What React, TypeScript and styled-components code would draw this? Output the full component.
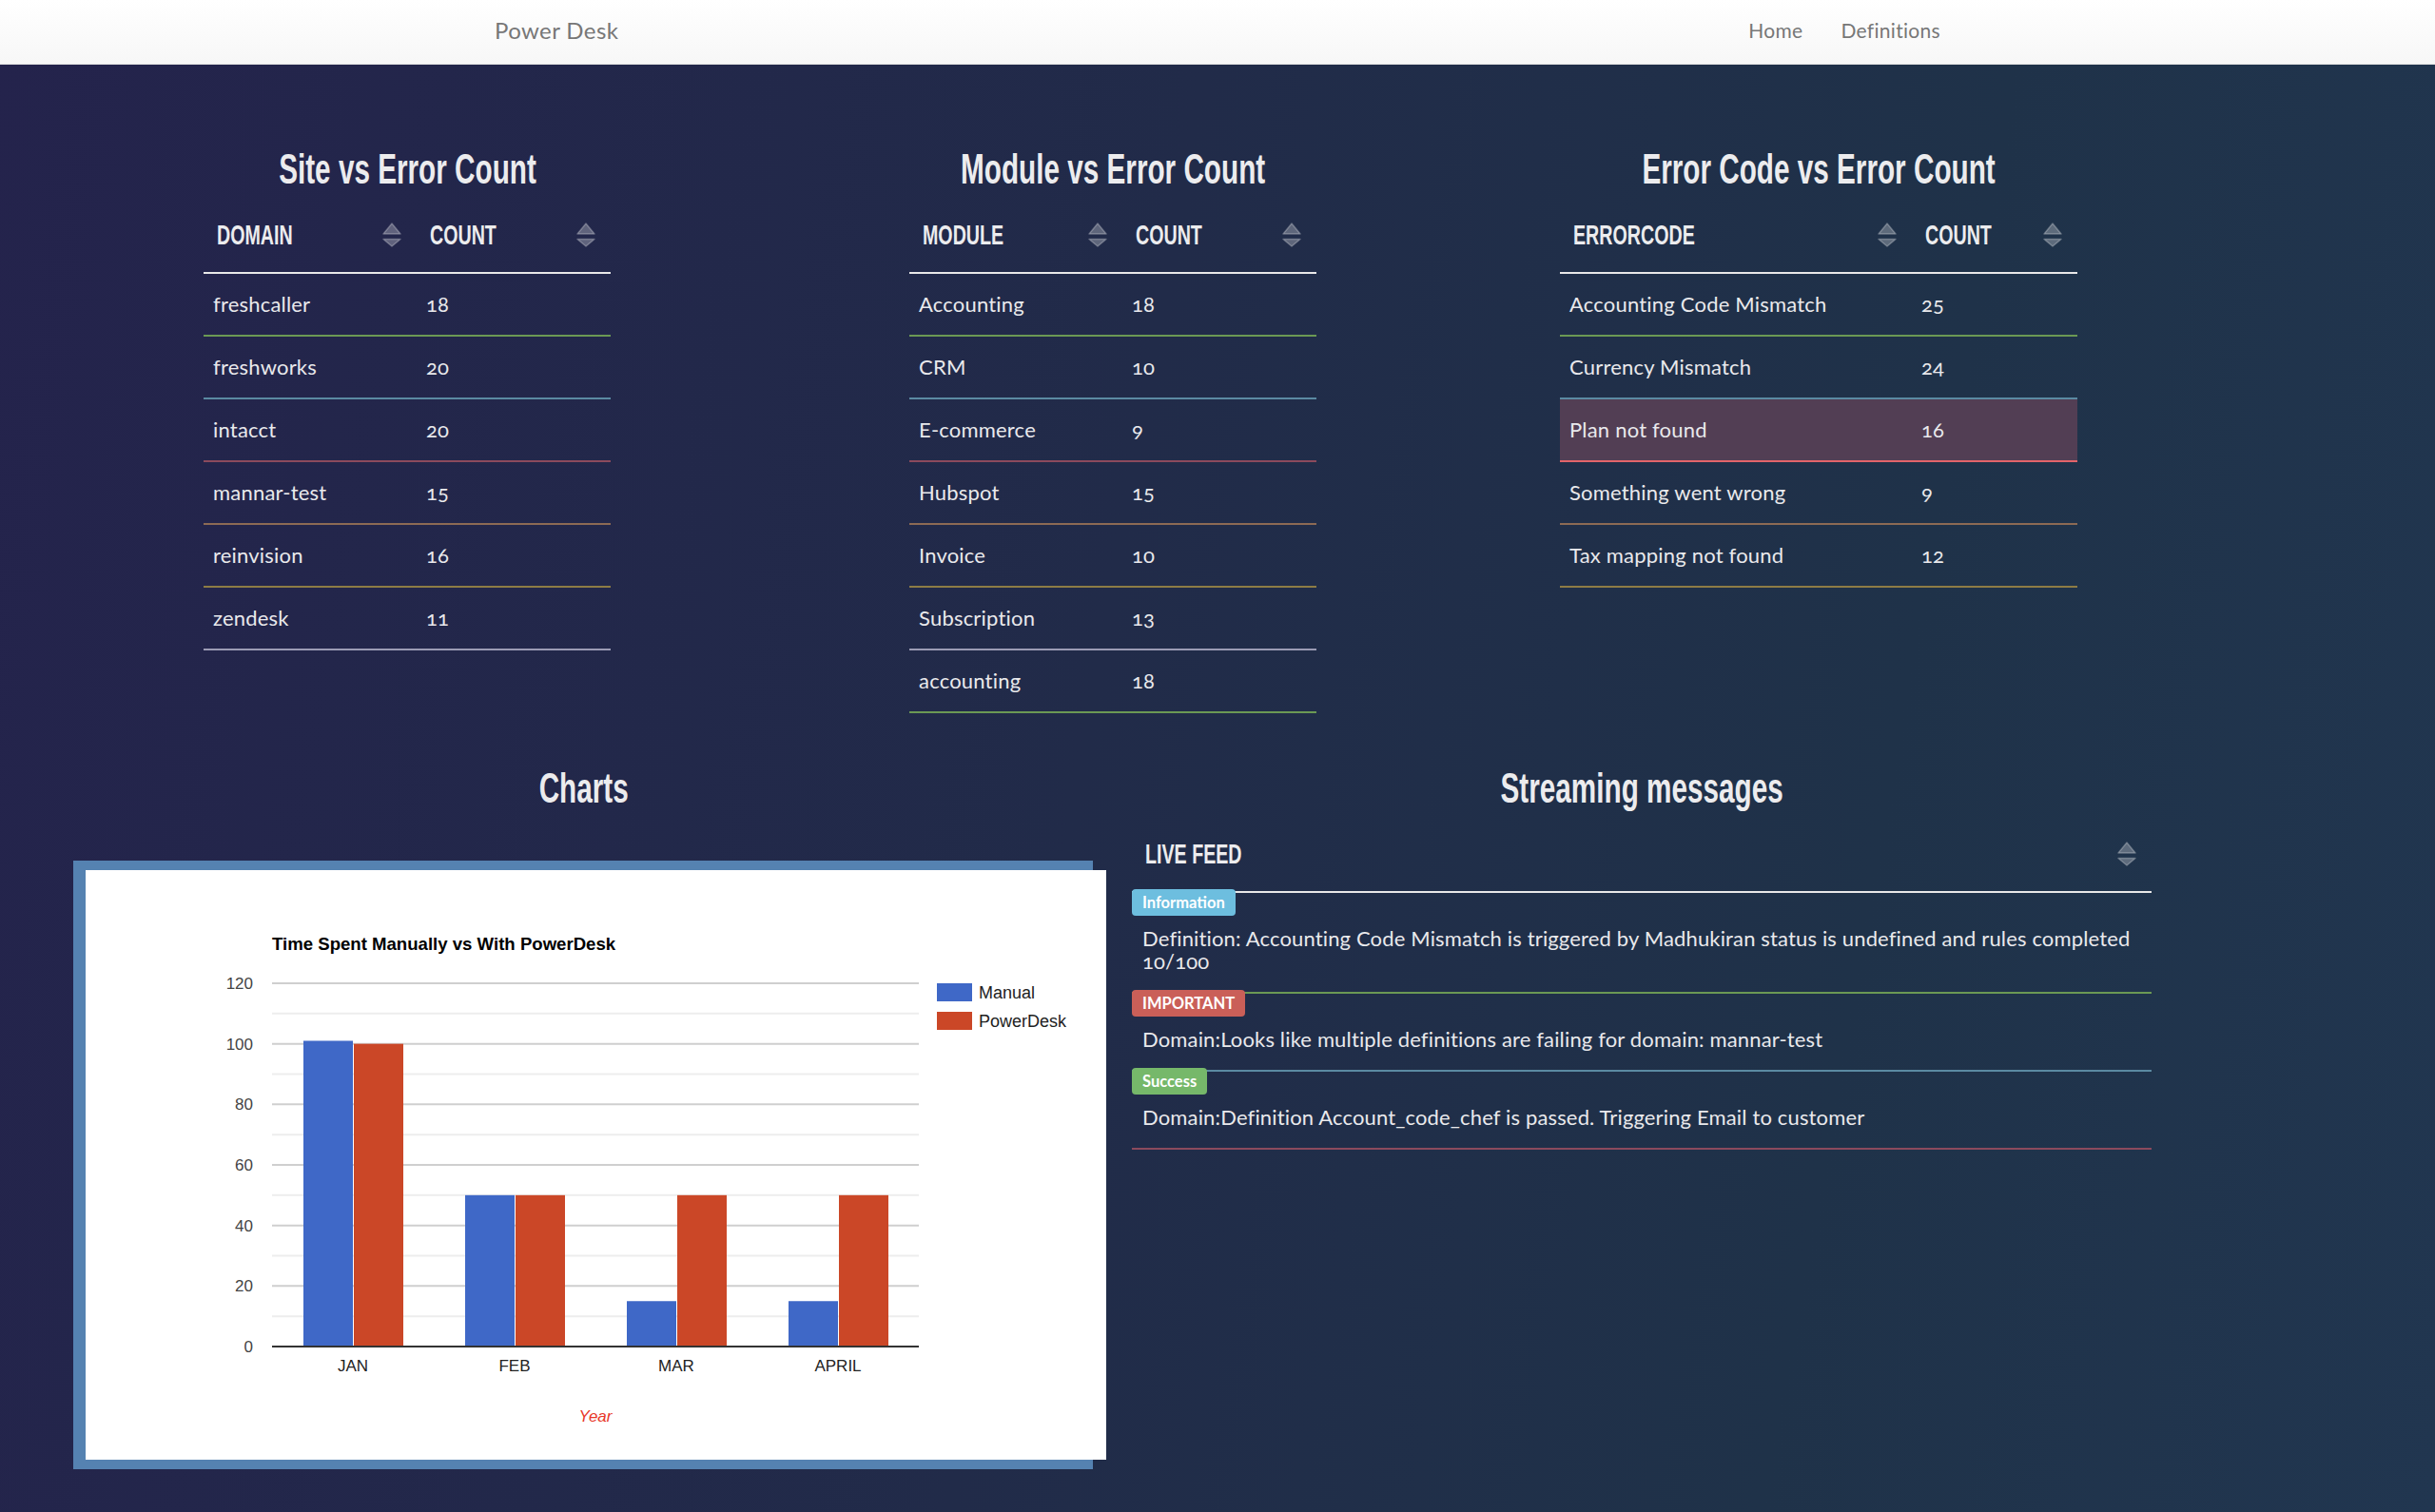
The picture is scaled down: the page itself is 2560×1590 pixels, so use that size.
import React from 'react';
import styled, { createGlobalStyle, css } from 'styled-components';

const GlobalStyle = createGlobalStyle`
  html, body { margin: 0; padding: 0; height: 100%; }
  body {
    min-height: 100%;
    background: linear-gradient(100deg, #24234c 0%, #212b49 45%, #1f3249 75%, #213650 100%);
    font-family: Lato, "Open Sans", sans-serif;
    color: #e9e9ec;
  }
`;

const condensed = `"Liberation Sans", Arial, sans-serif`;

const Navbar = styled.header`
  height: 67px;
  background: linear-gradient(to bottom, #ffffff 0%, #f7f7f7 100%);
  border-bottom: 1px solid #e2e2e2;
`;

const NavInner = styled.div`
  box-sizing: border-box;
  width: 1520px;
  height: 100%;
  margin: 0 auto;
  padding-bottom: 5px;
  display: flex;
  align-items: center;
  justify-content: space-between;
`;

const Brand = styled.a`
  font-size: 24px;
  color: #777;
  text-decoration: none;
  letter-spacing: 0.4px;
`;

const NavLinks = styled.nav`
  display: flex;
  gap: 40px;
`;

const NavLink = styled.a`
  font-size: 21px;
  color: #777;
  text-decoration: none;
  letter-spacing: 0.3px;
`;

const Main = styled.main`
  margin-left: 57px;
  width: 2226px;
  padding-top: 86px;
`;

const TopGrid = styled.section`
  display: grid;
  grid-template-columns: repeat(3, 742px);
  align-items: start;
  margin-bottom: 55px;
`;

const BottomGrid = styled.section`
  display: grid;
  grid-template-columns: repeat(2, 1113px);
  align-items: start;
`;

const Panel = styled.div`
  display: flex;
  flex-direction: column;
  align-items: center;
`;

const WidePanel = styled.div`
  display: flex;
  flex-direction: column;
  align-items: flex-start;
  padding: 0 20px;
`;

const Title = styled.h2`
  align-self: center;
  margin: 0 0 22px;
  font-family: ${condensed};
  font-size: 44px;
  line-height: 48px;
  font-weight: 700;
  color: #ececee;
  text-align: center;
  white-space: nowrap;
  transform: scaleX(0.675);
`;

const Table = styled.table`
  border-collapse: separate;
  border-spacing: 0;
  table-layout: fixed;
`;

const Col = styled.col<{ $w: number }>`
  width: ${(p) => p.$w}px;
`;

const Th = styled.th`
  padding: 8px 11px 24px 14px;
  text-align: left;
  border-bottom: 2px solid #e8e8e8;
`;

const ThInner = styled.div`
  display: flex;
  align-items: center;
  justify-content: space-between;
  padding-right: 5px;
`;

const HeadLabel = styled.span`
  display: inline-block;
  font-family: ${condensed};
  font-size: 30px;
  line-height: 30px;
  font-weight: 700;
  color: #ececee;
  text-transform: uppercase;
  white-space: nowrap;
  transform: scaleX(0.655);
  transform-origin: left center;
`;

const rowColors = css`
  & > tr:nth-child(6n + 1) > td { border-bottom-color: #6b9954; }
  & > tr:nth-child(6n + 2) > td { border-bottom-color: #5b8aa2; }
  & > tr:nth-child(6n + 3) > td { border-bottom-color: #8b4a5d; }
  & > tr:nth-child(6n + 4) > td { border-bottom-color: #8c6a54; }
  & > tr:nth-child(6n + 5) > td { border-bottom-color: #8d7c45; }
  & > tr:nth-child(6n + 6) > td { border-bottom-color: #9b9bb4; }
`;

const Body = styled.tbody`
  ${rowColors}
`;

const Tr = styled.tr<{ $active?: boolean }>`
  background: ${(p) => (p.$active ? '#523e54' : 'transparent')};
  & > td { ${(p) => (p.$active ? 'border-bottom-color: #e2646a !important;' : '')} }
`;

const Td = styled.td`
  padding: 20px 10px;
  border-bottom: 2px solid transparent;
  font-size: 22px;
  line-height: 24px;
  color: #e9e9ec;
  letter-spacing: 0.2px;
  white-space: nowrap;
  font-variant-numeric: oldstyle-nums;
`;

const FeedCell = styled.td`
  padding: 0 10px 20px 0;
  border-bottom: 2px solid transparent;
`;

type BadgeKind = 'info' | 'danger' | 'success';
const badgeBg: Record<BadgeKind, string> = {
  info: '#6dbedf',
  danger: '#ca5f58',
  success: '#76b86a',
};

const Badge = styled.span<{ $kind: BadgeKind }>`
  position: relative;
  display: block;
  width: fit-content;
  margin-top: -4px;
  height: 28px;
  padding: 0 11px;
  border-radius: 4px;
  background: ${(p) => badgeBg[p.$kind]};
  color: #fff;
  font-size: 16.5px;
  font-weight: 700;
  line-height: 28px;
`;

const Message = styled.p`
  margin: 12px 0 0;
  padding-left: 11px;
  max-width: 1052px;
  font-size: 22px;
  line-height: 24px;
  letter-spacing: 0.15px;
  color: #e9e9ec;
  font-variant-numeric: oldstyle-nums;
`;

const ChartFrame = styled.div`
  box-sizing: border-box;
  margin-top: 30px;
  width: 1072px;
  padding: 10px 0 10px 13px;
  background: #5582b1;
`;

const ChartCard = styled.div`
  width: 1073px;
  height: 620px;
  background: #ffffff;
`;

const SortIcon = () => (
  <svg width="20" height="26" viewBox="0 0 20 26" aria-hidden="true">
    <g fill="rgba(255,255,255,0.28)" stroke="rgba(255,255,255,0.28)" strokeWidth="1.5" strokeLinejoin="round">
      <polygon points="10,1 19,12 1,12" />
      <polygon points="1,17.5 19,17.5 10,25" />
    </g>
  </svg>
);

type Row = [string, number];

const siteRows: Row[] = [
  ['freshcaller', 18],
  ['freshworks', 20],
  ['intacct', 20],
  ['mannar-test', 15],
  ['reinvision', 16],
  ['zendesk', 11],
];

const moduleRows: Row[] = [
  ['Accounting', 18],
  ['CRM', 10],
  ['E-commerce', 9],
  ['Hubspot', 15],
  ['Invoice', 10],
  ['Subscription', 13],
  ['accounting', 18],
];

const errorRows: Row[] = [
  ['Accounting Code Mismatch', 25],
  ['Currency Mismatch', 24],
  ['Plan not found', 16],
  ['Something went wrong', 9],
  ['Tax mapping not found', 12],
];

const CountTable = ({
  title,
  first,
  widths,
  rows,
  active,
}: {
  title: string;
  first: string;
  widths: [number, number];
  rows: Row[];
  active?: number;
}) => (
  <Panel>
    <Title>{title}</Title>
    <Table>
      <colgroup>
        <Col $w={widths[0]} />
        <Col $w={widths[1]} />
      </colgroup>
      <thead>
        <tr>
          <Th>
            <ThInner>
              <HeadLabel>{first}</HeadLabel>
              <SortIcon />
            </ThInner>
          </Th>
          <Th>
            <ThInner>
              <HeadLabel>Count</HeadLabel>
              <SortIcon />
            </ThInner>
          </Th>
        </tr>
      </thead>
      <Body>
        {rows.map(([name, count], i) => (
          <Tr key={name} $active={active === i}>
            <Td>{name}</Td>
            <Td>{count}</Td>
          </Tr>
        ))}
      </Body>
    </Table>
  </Panel>
);

const feed: { kind: BadgeKind; label: string; text: string }[] = [
  {
    kind: 'info',
    label: 'Information',
    text: 'Definition: Accounting Code Mismatch is triggered by Madhukiran status is undefined and rules completed 10/100',
  },
  {
    kind: 'danger',
    label: 'IMPORTANT',
    text: 'Domain:Looks like multiple definitions are failing for domain: mannar-test',
  },
  {
    kind: 'success',
    label: 'Success',
    text: 'Domain:Definition Account_code_chef is passed. Triggering Email to customer',
  },
];

const C = { left: 196, right: 876, top: 119, bottom: 501, max: 120 };
const yOf = (v: number) => C.bottom - (v / C.max) * (C.bottom - C.top);
const months = ['JAN', 'FEB', 'MAR', 'APRIL'];
const manual = [101, 50, 15, 15];
const powerdesk = [100, 50, 50, 50];
const ticks = [0, 10, 20, 30, 40, 50, 60, 70, 80, 90, 100, 110, 120];

const BarChart = () => (
  <svg width="1073" height="620" viewBox="0 0 1073 620" fontFamily='"Liberation Sans", Arial, sans-serif'>
    <text x={C.left} y={84} fontSize="18.6" fontWeight="700" fill="#000">
      Time Spent Manually vs With PowerDesk
    </text>
    {ticks.map((v) => (
      <line
        key={v}
        x1={C.left}
        x2={C.right}
        y1={yOf(v)}
        y2={yOf(v)}
        stroke={v % 20 === 0 ? '#cfcfcf' : '#ededed'}
        strokeWidth="2"
      />
    ))}
    {ticks
      .filter((v) => v % 20 === 0)
      .map((v) => (
        <text key={v} x={176} y={yOf(v) + 6} fontSize="17" fill="#444" textAnchor="end">
          {v}
        </text>
      ))}
    {months.map((m, i) => {
      const c = C.left + 85 + i * 170;
      return (
        <g key={m}>
          <rect x={c - 52} y={yOf(manual[i])} width="52" height={C.bottom - yOf(manual[i])} fill="#3f68c7" />
          <rect x={c + 1} y={yOf(powerdesk[i])} width="52" height={C.bottom - yOf(powerdesk[i])} fill="#cb4727" />
          <text x={c} y={527} fontSize="17" fill="#222" textAnchor="middle">
            {m}
          </text>
        </g>
      );
    })}
    <line x1={C.left} x2={C.right} y1={C.bottom} y2={C.bottom} stroke="#333" strokeWidth="2" />
    <text x={(C.left + C.right) / 2} y={580} fontSize="17" fontStyle="italic" fill="#e8382a" textAnchor="middle">
      Year
    </text>
    <rect x={895} y={119} width="37" height="19" fill="#3f68c7" />
    <text x={939} y={135} fontSize="18" fill="#222">
      Manual
    </text>
    <rect x={895} y={149} width="37" height="19" fill="#cb4727" />
    <text x={939} y={165} fontSize="18" fill="#222">
      PowerDesk
    </text>
  </svg>
);

export default function App() {
  return (
    <>
      <GlobalStyle />
      <Navbar>
        <NavInner>
          <Brand href="#">Power Desk</Brand>
          <NavLinks>
            <NavLink href="#">Home</NavLink>
            <NavLink href="#">Definitions</NavLink>
          </NavLinks>
        </NavInner>
      </Navbar>
      <Main>
        <TopGrid>
          <CountTable title="Site vs Error Count" first="Domain" widths={[224, 204]} rows={siteRows} />
          <CountTable title="Module vs Error Count" first="Module" widths={[224, 204]} rows={moduleRows} />
          <CountTable
            title="Error Code vs Error Count"
            first="ErrorCode"
            widths={[370, 174]}
            rows={errorRows}
            active={2}
          />
        </TopGrid>
        <BottomGrid>
          <WidePanel>
            <Title>Charts</Title>
            <ChartFrame>
              <ChartCard>
                <BarChart />
              </ChartCard>
            </ChartFrame>
          </WidePanel>
          <WidePanel>
            <Title>Streaming messages</Title>
            <Table>
              <colgroup>
                <Col $w={1072} />
              </colgroup>
              <thead>
                <tr>
                  <Th>
                    <ThInner>
                      <HeadLabel>Live Feed</HeadLabel>
                      <SortIcon />
                    </ThInner>
                  </Th>
                </tr>
              </thead>
              <Body>
                {feed.map((f) => (
                  <tr key={f.label}>
                    <FeedCell>
                      <Badge $kind={f.kind}>{f.label}</Badge>
                      <Message>{f.text}</Message>
                    </FeedCell>
                  </tr>
                ))}
              </Body>
            </Table>
          </WidePanel>
        </BottomGrid>
      </Main>
    </>
  );
}
